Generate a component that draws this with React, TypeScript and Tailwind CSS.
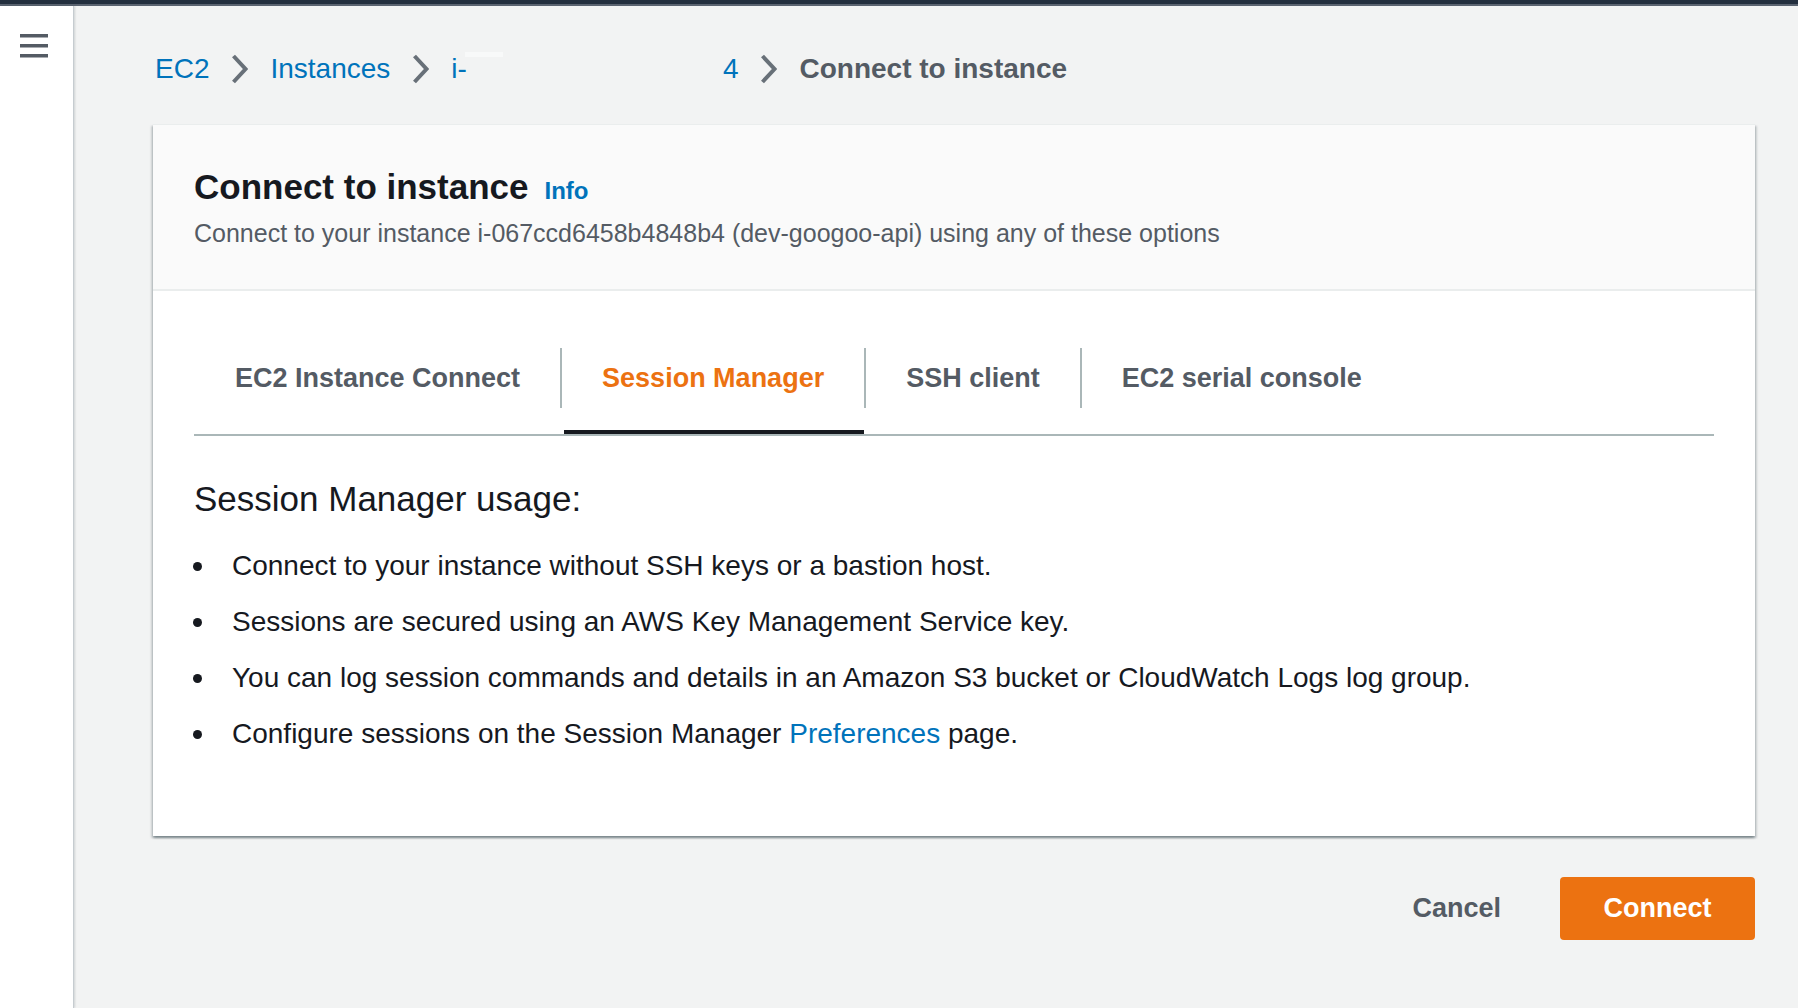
import React from "react";

const tabs = ["EC2 Instance Connect", "Session Manager", "SSH client", "EC2 serial console"];

function Chevron() {
  return (
    <svg width="17" height="30" viewBox="0 0 17 30" className="shrink-0">
      <polyline points="2.5,2 14.5,15 2.5,28" fill="none" stroke="#687078" strokeWidth="4" />
    </svg>
  );
}

export default function App() {
  const active = 1;

  return (
    <div className="h-[1008px] w-full bg-[#f2f3f3] font-['Liberation_Sans',Arial,sans-serif] overflow-hidden flex flex-col">
      {/* top nav strip */}
      <div className="h-[4px] bg-[#232f3e]" />
      <div className="h-[2px] bg-[#5a6370]" />

      <div className="flex flex-1">
        {/* side nav */}
        <div className="w-[74px] shrink-0 bg-white border-r border-[#c6ccd0] shadow-[1px_0_2px_rgba(0,28,36,0.15)]">
          <button className="mt-[28px] ml-[20px] block">
            <svg width="28" height="24" viewBox="0 0 28 24">
              <rect x="0" y="0" width="28" height="3.5" fill="#545b64" />
              <rect x="0" y="10" width="28" height="3.5" fill="#545b64" />
              <rect x="0" y="20" width="28" height="3.5" fill="#545b64" />
            </svg>
          </button>
        </div>

        {/* main */}
        <div className="flex-1 pl-[79px] pr-[43px]">
          {/* breadcrumbs */}
          <nav className="mt-[45px] pl-[2px] flex items-center gap-[22px] text-[28px] leading-[36px]">
            <a className="text-[#0073bb]">EC2</a>
            <Chevron />
            <a className="text-[#0073bb]">Instances</a>
            <Chevron />
            <a className="text-[#0073bb] flex items-center">
              <span>i-</span>
              <span className="relative inline-block w-[256px] h-[36px]">
                <span className="absolute left-[-2px] top-[1px] w-[38px] h-[5px] bg-[#f8f9f9]" />
              </span>
              <span>4</span>
            </a>
            <Chevron />
            <span className="text-[#545b64] font-bold">Connect to instance</span>
          </nav>

          {/* card */}
          <div className="mt-[37px] bg-white shadow-[0_2px_2px_0_rgba(0,28,36,0.3),2px_2px_2px_0_rgba(0,28,36,0.15),-2px_2px_2px_0_rgba(0,28,36,0.15)] border-t border-[#eaeded]">
            <div className="bg-[#fafafa] border-b-2 border-[#eaeded] px-[41px] pt-[40px] pb-[38px]">
              <div className="flex items-baseline gap-4">
                <h1 className="text-[35px] leading-[44px] font-bold text-[#16191f]">Connect to instance</h1>
                <a className="text-[24px] font-bold text-[#0073bb]">Info</a>
              </div>
              <p className="mt-[6px] text-[25px] leading-[36px] text-[#545b64]">
                Connect to your instance i-067ccd6458b4848b4 (dev-googoo-api) using any of these options
              </p>
            </div>

            <div className="px-[41px] pt-[31px] pb-[82px]">
              {/* tabs */}
              <div className="flex items-center h-[114px] border-b-2 border-[#aab7b8]">
                {tabs.map((t, i) => (
                  <React.Fragment key={t}>
                    {i > 0 && <div className="w-[2px] h-[60px] bg-[#aab7b8]" />}
                    <button
                      className={`relative h-full px-[40px] text-[27px] font-bold ${
                        i === 0 ? "pl-[41px]" : ""
                      } ${i === active ? "text-[#ec7211]" : "text-[#545b64]"}`}
                    >
                      {t}
                      {i === active && (
                        <span className="absolute left-[2px] right-0 bottom-0 h-[4px] bg-[#16191f]" />
                      )}
                    </button>
                  </React.Fragment>
                ))}
              </div>

              <h3 className="mt-[41px] text-[35px] leading-[44px] text-[#16191f]">Session Manager usage:</h3>
              <ul className="mt-[25px] flex flex-col gap-[16px] text-[28px] leading-[40px] text-[#16191f]">
                <li className="flex items-center">
                  <span className="w-[9px] h-[9px] rounded-full bg-[#16191f] ml-[-1px] mr-[30px]" />
                  Connect to your instance without SSH keys or a bastion host.
                </li>
                <li className="flex items-center">
                  <span className="w-[9px] h-[9px] rounded-full bg-[#16191f] ml-[-1px] mr-[30px]" />
                  Sessions are secured using an AWS Key Management Service key.
                </li>
                <li className="flex items-center">
                  <span className="w-[9px] h-[9px] rounded-full bg-[#16191f] ml-[-1px] mr-[30px]" />
                  You can log session commands and details in an Amazon S3 bucket or CloudWatch Logs log group.
                </li>
                <li className="flex items-center">
                  <span className="w-[9px] h-[9px] rounded-full bg-[#16191f] ml-[-1px] mr-[30px]" />
                  <span>
                    Configure sessions on the Session Manager <a className="text-[#0073bb]">Preferences</a> page.
                  </span>
                </li>
              </ul>
            </div>
          </div>

          {/* actions */}
          <div className="mt-[41px] flex justify-end items-center gap-[16px]">
            <button className="h-[63px] px-[43px] text-[27px] font-bold text-[#545b64]">Cancel</button>
            <button className="h-[63px] w-[195px] rounded-[4px] bg-[#ec7211] text-[27px] font-bold text-white">
              Connect
            </button>
          </div>
        </div>
      </div>
    </div>
  );
}
